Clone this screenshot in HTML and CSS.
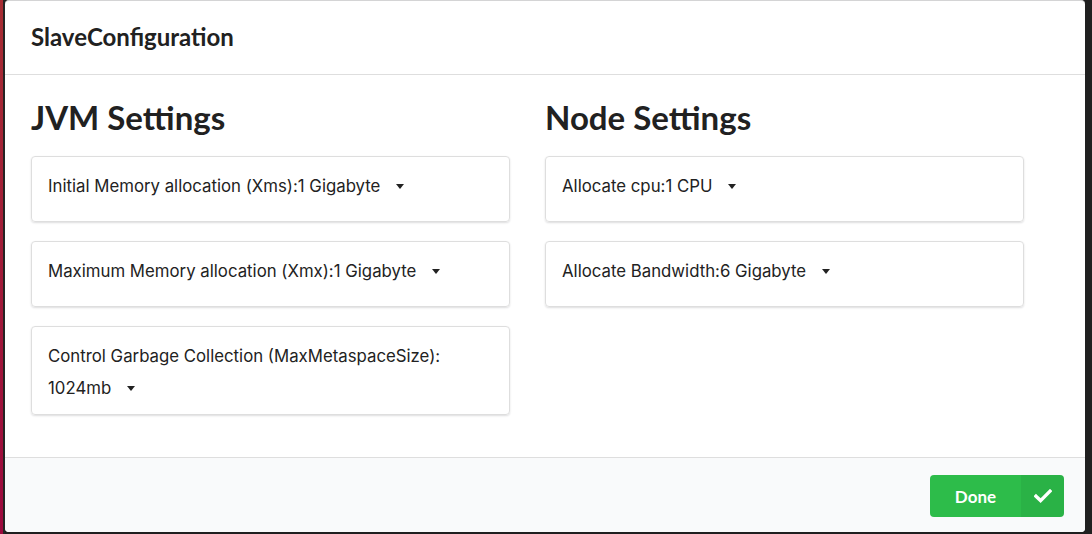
FILE: index.html
```html
<!DOCTYPE html>
<html lang="en">
<head>
<meta charset="utf-8">
<title>SlaveConfiguration</title>
<link rel="stylesheet" href="styles.css">
</head>
<body>
<div class="screen">
  <div class="edge edge-left"></div>
  <div class="modal">
    <div class="modal-header">SlaveConfiguration</div>
    <div class="modal-content">
      <div class="settings-grid">
        <section class="column">
          <h2 class="col-title">JVM Settings</h2>
          <div class="segment">
            <span class="label">Initial Memory allocation (Xms):</span><span class="dropdown">1 Gigabyte<svg class="caret" width="8" height="5" viewBox="0 0 8 5"><path d="M0 0H8L4 5Z"/></svg></span>
          </div>
          <div class="segment">
            <span class="label">Maximum Memory allocation (Xmx):</span><span class="dropdown">1 Gigabyte<svg class="caret" width="8" height="5" viewBox="0 0 8 5"><path d="M0 0H8L4 5Z"/></svg></span>
          </div>
          <div class="segment">
            <span class="label">Control Garbage Collection (MaxMetaspaceSize):</span><span class="dropdown">1024mb<svg class="caret" width="8" height="5" viewBox="0 0 8 5"><path d="M0 0H8L4 5Z"/></svg></span>
          </div>
        </section>
        <section class="column">
          <h2 class="col-title">Node Settings</h2>
          <div class="segment">
            <span class="label">Allocate cpu:</span><span class="dropdown">1 CPU<svg class="caret" width="8" height="5" viewBox="0 0 8 5"><path d="M0 0H8L4 5Z"/></svg></span>
          </div>
          <div class="segment">
            <span class="label">Allocate Bandwidth:</span><span class="dropdown">6 Gigabyte<svg class="caret" width="8" height="5" viewBox="0 0 8 5"><path d="M0 0H8L4 5Z"/></svg></span>
          </div>
        </section>
      </div>
    </div>
    <div class="modal-actions">
      <button class="btn-done" type="button">
        <span class="btn-text">Done</span>
        <span class="btn-icon"><svg width="18" height="14" viewBox="0 0 18 14"><path d="M2 7.2L6.6 11.6L16 2.2" fill="none" stroke="#fff" stroke-width="3.4" stroke-linecap="square"/></svg></span>
      </button>
    </div>
  </div>
  <div class="edge edge-right"></div>
</div>
</body>
</html>
```
FILE: styles.css
```css
html, body {
  margin: 0;
  padding: 0;
}
body {
  width: 1092px;
  height: 534px;
  overflow: hidden;
  background: #1f1f1f;
}
.screen {
  display: flex;
  height: 534px;
}
.edge-left {
  width: 3px;
  flex: none;
  background: linear-gradient(#a62d33, #9c0a3e);
  border-right: 2px solid #242424;
}
.edge-right {
  flex: 1;
  background: #202020;
}

.modal {
  width: 1080px;
  height: 531px;
  flex: none;
  background: #fff;
  border-top: 1px solid #d4d4d5;
  border-radius: 4px;
  overflow: hidden;
  display: flex;
  flex-direction: column;
}
.modal-header {
  font: 700 24px/30px "Lato", sans-serif;
  color: #212121;
  padding: 21px 26px 22px;
  border-bottom: 1px solid #dedede;
}
.modal-content {
  padding: 22px 26px 42px;
}
.settings-grid {
  display: grid;
  grid-template-columns: 1fr 1fr;
}
.column {
  padding-right: 35px;
}
.col-title {
  margin: 0 0 19px;
  font: 700 33px/40px "Lato", sans-serif;
  color: #212121;
}
.segment {
  box-sizing: border-box;
  min-height: 66px;
  padding: 13px 16px 10px;
  margin-bottom: 19px;
  border: 1px solid #dedede;
  border-radius: 4px;
  box-shadow: 0 1px 2px rgba(34, 36, 38, 0.15);
  font: 400 16.8px/32px "Inter", sans-serif;
  color: #222;
}
.segment:last-child {
  margin-bottom: 0;
}
.dropdown {
  display: inline-block;
  white-space: nowrap;
}
.caret {
  margin-left: 16px;
  vertical-align: 3px;
  fill: #222;
}
.modal-actions {
  flex: 1;
  display: flex;
  justify-content: flex-end;
  align-items: flex-start;
  padding: 17px 21px 0;
  background: #f9fafb;
  border-top: 1px solid #dedede;
}
.btn-done {
  display: flex;
  width: 134px;
  height: 42px;
  padding: 0;
  border: 0;
  border-radius: 4px;
  overflow: hidden;
  background: #2dbc4a;
  color: #fff;
  font: 700 17px/43px "Lato", sans-serif;
}
.btn-text {
  flex: 1;
  text-align: center;
}
.btn-icon {
  width: 43px;
  display: flex;
  align-items: center;
  justify-content: center;
  background: rgba(0, 0, 0, 0.05);
}
```
